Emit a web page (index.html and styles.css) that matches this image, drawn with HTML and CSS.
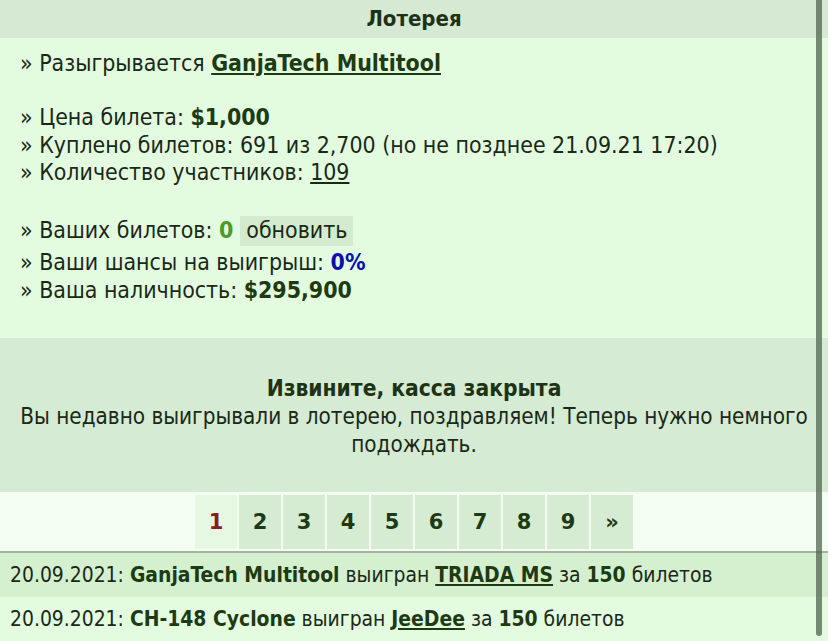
FILE: index.html
```html
<!DOCTYPE html>
<html lang="ru">
<head>
    <meta charset="UTF-8">
    <meta name="viewport" content="width=device-width, initial-scale=1.0">
    <title>Лотерея</title>
    <link rel="stylesheet" href="styles.css">
</head>
<body>
    <div class="lottery">
        <div class="lottery-head">Лотерея</div>

        <div class="lottery-info">
            <div class="line">» Разыгрывается <a href="#" class="prize">GanjaTech Multitool</a></div>

            <div class="group">
                <div class="line">» Цена билета: <b>$1,000</b></div>
                <div class="line">» Куплено билетов: 691 из 2,700 (но не позднее 21.09.21 17:20)</div>
                <div class="line">» Количество участников: <a href="#" class="plain-link">109</a></div>
            </div>

            <div class="group">
                <div class="line line-refresh">» Ваших билетов:&nbsp;<b class="tickets">0</b> <button class="refresh">обновить</button></div>
                <div class="line">» Ваши шансы на выигрыш: <b class="chance">0%</b></div>
                <div class="line">» Ваша наличность: <b>$295,900</b></div>
            </div>
        </div>

        <div class="closed">
            <div class="closed-title">Извините, касса закрыта</div>
            <div>Вы недавно выигрывали в лотерею, поздравляем! Теперь нужно немного подождать.</div>
        </div>

        <div class="pager">
            <span class="page current">1</span>
            <a href="#" class="page">2</a>
            <a href="#" class="page">3</a>
            <a href="#" class="page">4</a>
            <a href="#" class="page">5</a>
            <a href="#" class="page">6</a>
            <a href="#" class="page">7</a>
            <a href="#" class="page">8</a>
            <a href="#" class="page">9</a>
            <a href="#" class="page">»</a>
        </div>

        <div class="winners">
            <div class="winner odd">20.09.2021: <b>GanjaTech Multitool</b> выигран <a href="#" class="prize">TRIADA MS</a> за <b>150</b> билетов</div>
            <div class="winner">20.09.2021: <b>CH-148 Cyclone</b> выигран <a href="#" class="prize">JeeDee</a> за <b>150</b> билетов</div>
        </div>
    </div>

    <!-- scroll indicator on the right edge -->
    <div class="scroll-thumb"></div>
</body>
</html>
```

FILE: styles.css
```css
body {
    margin: 0;
    padding: 0;
    background-color: #f4fdf2;
    font-family: "DejaVu Sans Condensed", "DejaVu Sans", sans-serif;
    font-size: 22.9px;
    color: #1a2817;
}

b {
    color: #1e3a12;
}

.lottery {
    width: 100%;
}

.lottery-head {
    background-color: #d5e9d3;
    height: 38px;
    line-height: 38px;
    text-align: center;
    font-size: 22px;
    font-weight: bold;
    color: #1d3313;
}

.lottery-info {
    background-color: #e3fcdf;
    padding: 12px 20px 34px;
}

.line {
    line-height: 27.5px;
}

.group {
    margin-top: 26.5px;
}

.prize {
    color: #1e3a12;
    font-weight: bold;
}

.plain-link {
    color: #1a2817;
}

.line-refresh {
    display: flex;
    align-items: center;
    height: 36px;
}

.tickets {
    color: #4b9a2c;
}

.chance {
    color: #0a10b0;
}

.refresh {
    font: inherit;
    color: #1a2817;
    background-color: #d5ebd0;
    border: none;
    margin-left: 7px;
    padding: 0 6px;
    height: 30px;
    cursor: pointer;
}

.closed {
    background-color: #d5ebd3;
    text-align: center;
    font-size: 22.3px;
    line-height: 28px;
    padding: 36px 10px 34px;
}

.closed-title {
    font-size: 22.6px;
    font-weight: bold;
    color: #1d3313;
}

.pager {
    display: flex;
    justify-content: center;
    gap: 2px;
    padding: 3px 0 2px;
    background-color: #f4fdf2;
    border-bottom: 2px solid #a3b59f;
}

.page {
    width: 42px;
    height: 54px;
    line-height: 54px;
    text-align: center;
    font-family: "DejaVu Sans", sans-serif;
    font-size: 21px;
    font-weight: bold;
    color: #1e3a12;
    text-decoration: none;
    background-color: #d5ebd2;
}

.page.current {
    background-color: #e6f8e2;
    color: #8b1b1b;
}

.winner {
    height: 44px;
    line-height: 44px;
    padding: 0 10px;
    font-size: 20.9px;
    background-color: #e3fbdf;
}

.winner.odd {
    background-color: #d4f0cf;
}

.scroll-thumb {
    position: fixed;
    top: 0;
    right: 6px;
    width: 6px;
    height: 636px;
    border-radius: 0 0 3px 3px;
    background-color: rgba(80, 100, 80, 0.75);
}
```
